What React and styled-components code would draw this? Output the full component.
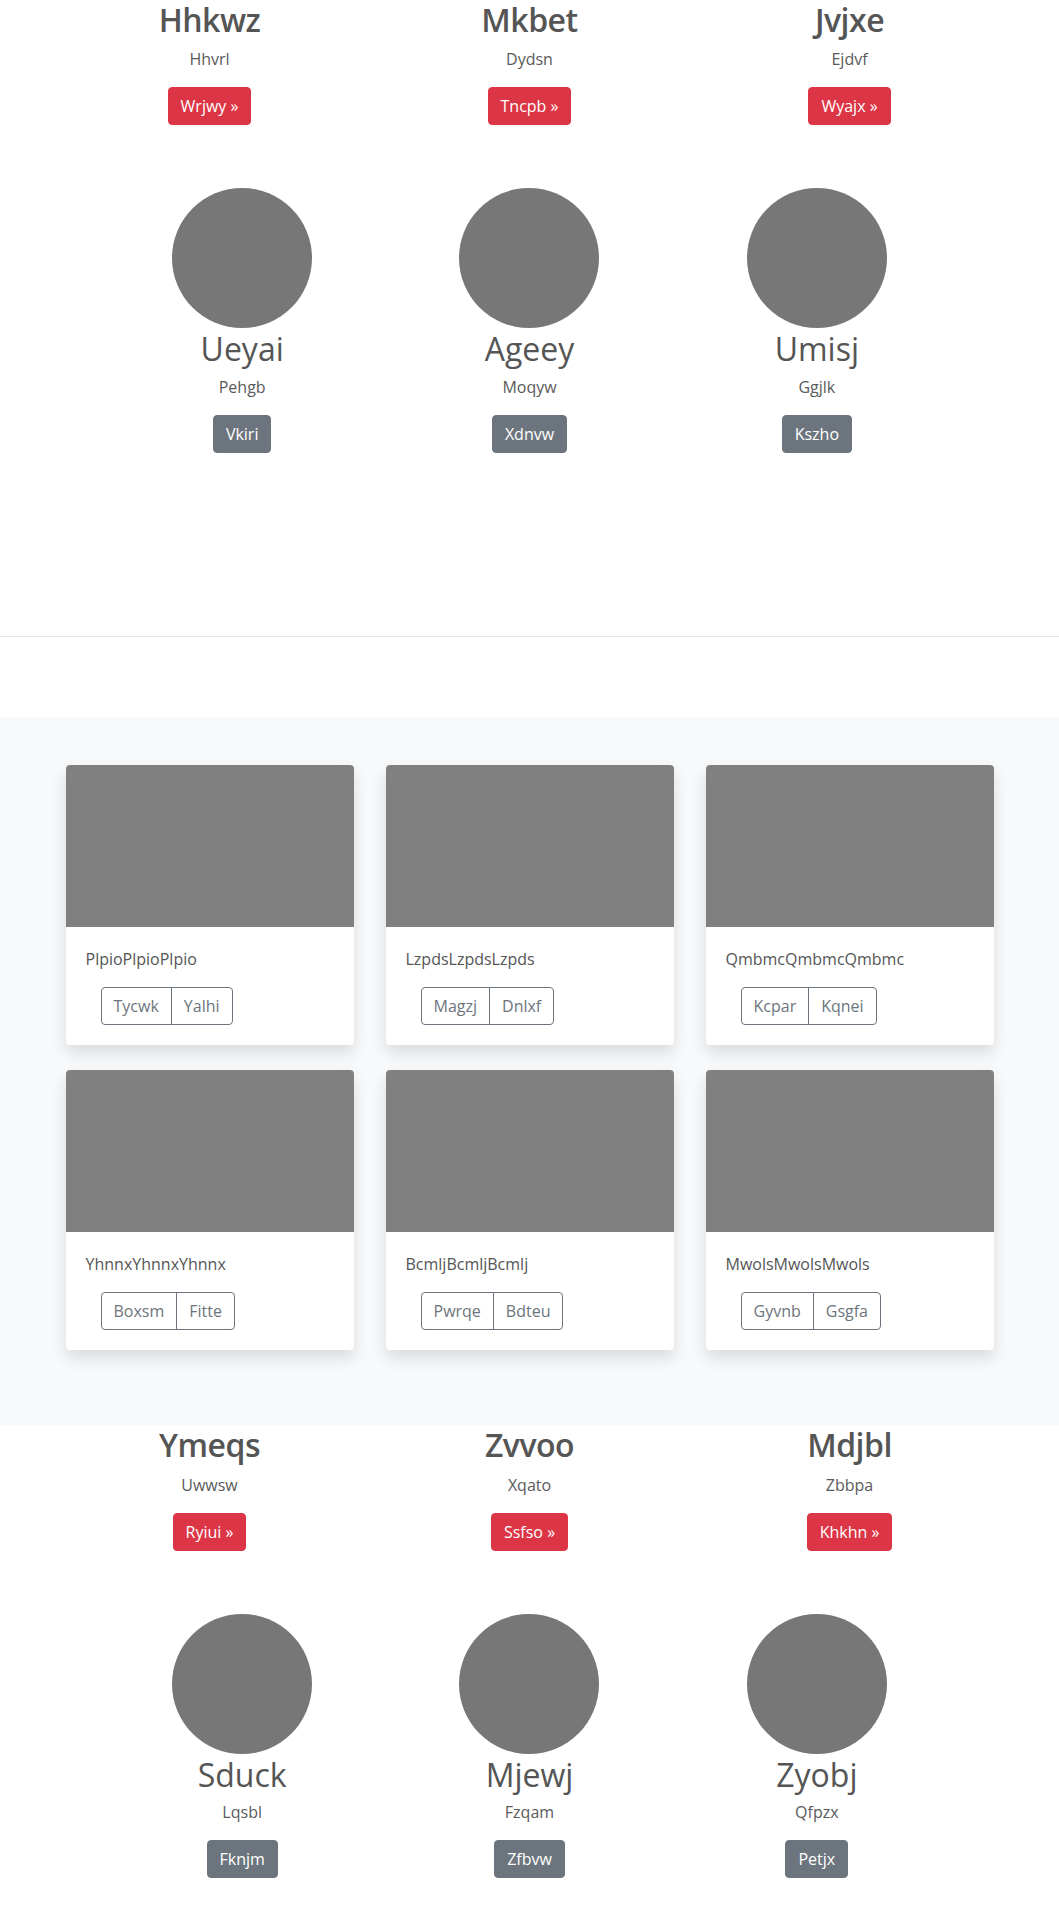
import React from "react"
import styled, { createGlobalStyle } from "styled-components"

const GlobalStyle = createGlobalStyle`
  * { box-sizing: border-box; }
  body {
    margin: 0;
    font-family: "Open Sans", "Noto Sans", sans-serif;
    font-size: 16px;
    line-height: 1.5;
    color: #5a5a5a;
    background: #fff;
  }
`

const Block = styled.section`
  padding-top: 1px;
  padding-bottom: 63px;
`

const Row = styled.div`
  display: grid;
  grid-template-columns: repeat(3, 1fr);
  width: ${props => props.wide ? "960px" : "862px"};
  margin: 0 auto;
  padding-bottom: ${props => props.gap || 0}px;
`

const Col = styled.div`
  display: flex;
  flex-direction: column;
  align-items: center;
  text-align: center;
`

const Title = styled.h2`
  margin: ${props => props.light ? "2px 0 6px" : "0 0 8px"};
  font-size: 32px;
  line-height: 1.2;
  font-weight: ${props => props.light ? 400 : 600};
  letter-spacing: ${props => props.light ? "0" : "-0.5px"};
  color: #555;
`

const Sub = styled.p`
  margin: 0 0 16px;
  font-size: 16px;
  line-height: 24px;
`

const Button = styled.a`
  display: inline-block;
  padding: 6px 12px;
  font-size: 16px;
  line-height: 24px;
  border: 1px solid ${props => props.red ? "#dc3545" : "#6c757d"};
  border-radius: 4px;
  background: ${props => props.red ? "#dc3545" : "#6c757d"};
  color: #fff;
  text-decoration: none;
`

const Circle = styled.div`
  width: 140px;
  height: 140px;
  border-radius: 50%;
  background: #777;
`

const Divider = styled.hr`
  margin: 120px 0 80px;
  border: 0;
  border-top: 1px solid #e5e5e5;
`

const Album = styled.section`
  background: #f8f9fa;
  padding: 48px 0 50px;
`

const CardGrid = styled.div`
  display: grid;
  grid-template-columns: repeat(3, 288px);
  column-gap: 32px;
  row-gap: 25.6px;
  width: 928px;
  margin: 0 auto;
  padding-bottom: 25px;
`

const Card = styled.div`
  background: #fff;
  border-radius: 4px;
  overflow: hidden;
  box-shadow: 0 8px 16px rgba(0, 0, 0, 0.12);
`

const CardImage = styled.div`
  height: 162px;
  background: #808080;
`

const CardBody = styled.div`
  padding: 20px;
`

const CardText = styled.p`
  margin: 0 0 16px;
  font-size: 16px;
  line-height: 24px;
  color: #555;
`

const BtnGroup = styled.div`
  display: inline-flex;
  margin-left: 15px;
`

const OutlineBtn = styled.button`
  font-family: inherit;
  font-size: 16px;
  line-height: 24px;
  padding: 6px 12px;
  background: transparent;
  color: #6c757d;
  border: 1px solid #6c757d;
  border-radius: ${props => props.first ? "4px 0 0 4px" : "0 4px 4px 0"};
  margin-left: ${props => props.first ? "0" : "-1px"};
`

const topA = [
  { t: "Hhkwz", s: "Hhvrl", b: "Wrjwy" },
  { t: "Mkbet", s: "Dydsn", b: "Tncpb" },
  { t: "Jvjxe", s: "Ejdvf", b: "Wyajx" },
]
const topB = [
  { t: "Ueyai", s: "Pehgb", b: "Vkiri" },
  { t: "Ageey", s: "Moqyw", b: "Xdnvw" },
  { t: "Umisj", s: "Ggjlk", b: "Kszho" },
]
const botA = [
  { t: "Ymeqs", s: "Uwwsw", b: "Ryiui" },
  { t: "Zvvoo", s: "Xqato", b: "Ssfso" },
  { t: "Mdjbl", s: "Zbbpa", b: "Khkhn" },
]
const botB = [
  { t: "Sduck", s: "Lqsbl", b: "Fknjm" },
  { t: "Mjewj", s: "Fzqam", b: "Zfbvw" },
  { t: "Zyobj", s: "Qfpzx", b: "Petjx" },
]

const cards = [
  { t: "PlpioPlpioPlpio", a: "Tycwk", b: "Yalhi" },
  { t: "LzpdsLzpdsLzpds", a: "Magzj", b: "Dnlxf" },
  { t: "QmbmcQmbmcQmbmc", a: "Kcpar", b: "Kqnei" },
  { t: "YhnnxYhnnxYhnnx", a: "Boxsm", b: "Fitte" },
  { t: "BcmljBcmljBcmlj", a: "Pwrqe", b: "Bdteu" },
  { t: "MwolsMwolsMwols", a: "Gyvnb", b: "Gsgfa" },
]

function Marketing({ first, second }) {
  return (
    <Block>
      <Row wide gap={63}>
        {first.map(item => (
          <Col key={item.t}>
            <Title>{item.t}</Title>
            <Sub>{item.s}</Sub>
            <Button red href="#">{item.b} &raquo;</Button>
          </Col>
        ))}
      </Row>
      <Row>
        {second.map(item => (
          <Col key={item.t}>
            <Circle />
            <Title light>{item.t}</Title>
            <Sub>{item.s}</Sub>
            <Button href="#">{item.b}</Button>
          </Col>
        ))}
      </Row>
    </Block>
  )
}

export default function App() {
  return (
    <>
      <GlobalStyle />
      <Marketing first={topA} second={topB} />
      <Divider />
      <Album>
        <CardGrid>
          {cards.map(c => (
            <Card key={c.t}>
              <CardImage />
              <CardBody>
                <CardText>{c.t}</CardText>
                <BtnGroup>
                  <OutlineBtn first>{c.a}</OutlineBtn>
                  <OutlineBtn>{c.b}</OutlineBtn>
                </BtnGroup>
              </CardBody>
            </Card>
          ))}
        </CardGrid>
      </Album>
      <Marketing first={botA} second={botB} />
    </>
  )
}
